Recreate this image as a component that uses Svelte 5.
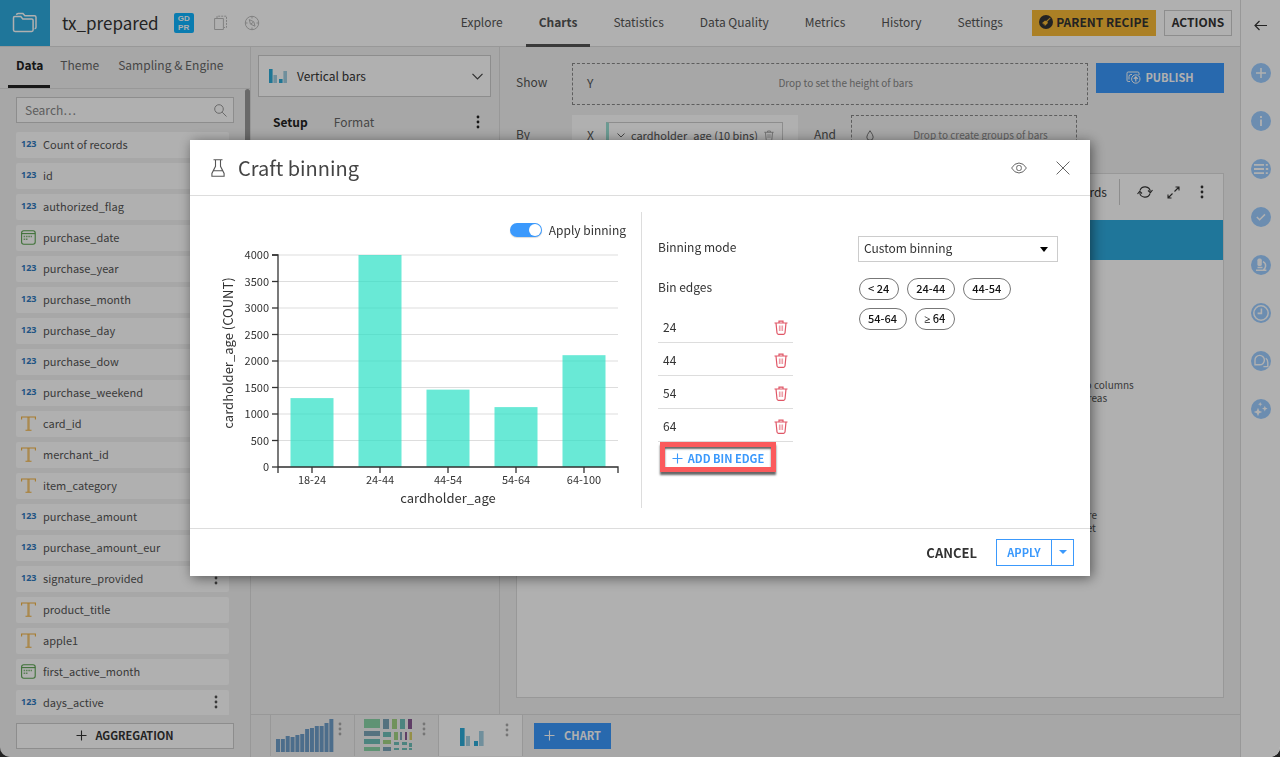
<script lang="ts">
  type ColumnKind = "num" | "date" | "text";
  type Column = { name: string; kind: ColumnKind; menu?: boolean };

  const navItems = ["Explore", "Charts", "Statistics", "Data Quality", "Metrics", "History", "Settings"];

  const columns: Column[] = [
    { name: "Count of records", kind: "num" },
    { name: "id", kind: "num" },
    { name: "authorized_flag", kind: "num" },
    { name: "purchase_date", kind: "date" },
    { name: "purchase_year", kind: "num" },
    { name: "purchase_month", kind: "num" },
    { name: "purchase_day", kind: "num" },
    { name: "purchase_dow", kind: "num" },
    { name: "purchase_weekend", kind: "num" },
    { name: "card_id", kind: "text" },
    { name: "merchant_id", kind: "text" },
    { name: "item_category", kind: "text" },
    { name: "purchase_amount", kind: "num" },
    { name: "purchase_amount_eur", kind: "num" },
    { name: "signature_provided", kind: "num", menu: true },
    { name: "product_title", kind: "text" },
    { name: "apple1", kind: "text" },
    { name: "first_active_month", kind: "date" },
    { name: "days_active", kind: "num", menu: true },
  ];

  const bins = [
    { label: "18-24", count: 1300 },
    { label: "24-44", count: 4000 },
    { label: "44-54", count: 1460 },
    { label: "54-64", count: 1130 },
    { label: "64-100", count: 2110 },
  ];

  const railItems = ["Add", "Details", "Schema", "Checks", "Lab", "Timeline", "Discussions", "Assistant"];

  const ticks = [0, 500, 1000, 1500, 2000, 2500, 3000, 3500, 4000];
  const plot = { left: 62, right: 402, top: 11, bottom: 223 };
  const band = (plot.right - plot.left) / bins.length;
  const barWidth = 43;

  let activeNav = $state("Charts");
  let applyBinning = $state(true);
  let binningMode = $state("custom");
  let edges = $state([24, 44, 54, 64]);

  let ranges = $derived(edges.slice(1).map((edge, i) => `${edges[i]}-${edge}`));

  function yFor(value: number): number {
    return plot.bottom - (value / 4000) * (plot.bottom - plot.top);
  }

  function xFor(index: number): number {
    return plot.left + band * (index + 0.5);
  }

  function removeEdge(index: number) {
    edges = edges.filter((_, i) => i !== index);
  }

  function addEdge() {
    edges = [...edges, (edges[edges.length - 1] ?? 14) + 10];
  }
</script>

{#snippet dots()}
  <svg class="dots" width="4" height="16" viewBox="0 0 4 16" fill="currentColor" aria-hidden="true">
    <circle cx="2" cy="3" r="1.4" />
    <circle cx="2" cy="8" r="1.4" />
    <circle cx="2" cy="13" r="1.4" />
  </svg>
{/snippet}

{#snippet plus()}
  <svg width="11" height="11" viewBox="0 0 11 11" stroke="currentColor" stroke-width="1.1" aria-hidden="true">
    <path d="M5.5 .5v10M.5 5.5h10" />
  </svg>
{/snippet}

{#snippet trash()}
  <svg width="14" height="15" viewBox="0 0 14 15" fill="none" stroke="currentColor" aria-hidden="true">
    <path d="M.5 3h13M5 2.800V1.200h4v1.600M2 3l1 10q.2 1.300 1.400 1.300h5.200q1.200 0 1.400-1.300L12 3" stroke-width="1.2" />
    <path d="M5.400 5.500v5.500M7 5.500v5.500M8.600 5.500v5.500" stroke-width=".8" opacity=".8" />
  </svg>
{/snippet}

{#snippet kindIcon(kind: ColumnKind)}
  {#if kind === "num"}
    <span class="kind-num">123</span>
  {:else if kind === "date"}
    <svg width="15" height="15" viewBox="0 0 15 15" fill="none" stroke="#5ba552" aria-hidden="true">
      <rect x=".6" y=".8" width="13.6" height="13.4" rx="2.2" stroke-width="1.1" />
      <path d="M.6 3.600h13.600" stroke-width="1.1" />
      <path d="M5 6.500h6M2.600 9.200h4" stroke-width="1.6" stroke-dasharray="1.6 .7" opacity=".75" />
      <path d="M2.600 6.500h2" stroke-width="1.6" stroke-dasharray="1.6 .7" opacity=".75" />
    </svg>
  {:else}
    <svg width="15" height="15" viewBox="0 0 15 15" fill="none" stroke="#f3b23f" aria-hidden="true">
      <path d="M.6 3.600V1h13.800v2.600M4.500 14.300h6" stroke-width="1.1" />
      <path d="M7.500 1v13" stroke-width="2.4" opacity=".7" />
    </svg>
  {/if}
{/snippet}

{#snippet miniBars()}
  <svg width="18" height="14" viewBox="0 0 18 14" aria-hidden="true">
    <path d="M0 0h3.600v14H0zM10 10h3.600v4H10z" fill="#2eabd8" />
    <path d="M4.400 6H8v8H4.400zM14.400 2H18v12h-3.600z" fill="#a2cfe2" />
  </svg>
{/snippet}

{#snippet railIcon(name: string)}
  <svg width="20" height="20" viewBox="0 0 20 20" fill="none" stroke="#fff" stroke-width="1.5" aria-hidden="true">
    <circle cx="10" cy="10" r="10" fill="#9dcdff" stroke="none" />
    {#if name === "Add"}
      <path d="M10 5v10M5 10h10" />
    {:else if name === "Details"}
      <path d="M10 8.500V15M10 5v2" stroke-width="1.8" />
    {:else if name === "Schema"}
      <path d="M3 5.800h10M3 10h10M3 14.200h10M14.800 5.800h2M14.800 10h2.400M14.800 14.200h2" stroke-width="1.8" />
    {:else if name === "Checks"}
      <path d="M5.800 10l2.800 2.700L14 7.400" />
    {:else if name === "Lab"}
      <rect x="6.4" y="3.6" width="4.4" height="7.4" rx="1.6" fill="#fff" stroke="none" />
      <path d="M5 15.300h10.400M12 6.600q3 1.400 2.600 4.600-.3 2.400-2.200 3.600M6.500 12.400h5" />
    {:else if name === "Timeline"}
      <circle cx="10" cy="10" r="7.2" />
      <path d="M10.400 5.600v4.800H6.600" stroke-width="1.6" />
    {:else if name === "Discussions"}
      <path d="M4 13.800V9.200a4.700 4.700 0 1 1 4.700 4.600zM14.800 7.200q2 1.400 2 4.200v4.200h-4.400" stroke-width="1.4" />
    {:else}
      <path
        d="M7 8.800l1.200 3 3 1.200-3 1.200L7 17.200l-1.200-3-3-1.200 3-1.200zM13.800 6.800l.8 2 2 .8-2 .8-.8 2-.8-2-2-.8 2-.8zM9.200 3l.6 1.600 1.600.6-1.600.6-.6 1.600-.6-1.600L7 5.200l1.600-.6z"
        fill="#fff"
        stroke="none"
      />
    {/if}
  </svg>
{/snippet}

<div class="app">
  <div class="workspace">
    <header class="topbar">
      <a class="logo" href="#flow" aria-label="Datasets">
        <svg width="26" height="22" viewBox="0 0 26 22" fill="none" stroke="#fff" stroke-width="1.5" aria-hidden="true">
          <path d="M1.500 18V5.800q0-1.300 1.300-1.300h6l2 2.500h9q1.300 0 1.300 1.300V18q0 1.400-1.400 1.400H3q-1.500 0-1.500-1.400z" />
          <path d="M4.500 2.800q.2-1.300 1.600-1.300h4.800l2 2.300h9.500q1.600 0 1.600 1.500v9.900q0 1.300-1.400 1.500" />
        </svg>
      </a>
      <h1>tx_prepared</h1>
      <span class="gdpr"><span>GD</span><span>PR</span></span>
      <svg class="meta-icon" width="14" height="16" viewBox="0 0 14 16" fill="none" stroke="#bbb" aria-hidden="true">
        <path d="M.6 3.500h8.800v11H.6z" />
        <path d="M3 3V1.200h9.500v11.300h-2.500" stroke-dasharray="2 1" />
      </svg>
      <svg class="meta-icon" width="16" height="16" viewBox="0 0 16 16" fill="none" stroke="#bbb" aria-hidden="true">
        <circle cx="8" cy="8" r="6.7" />
        <path d="M8 1v2.500M8 12.500V15M1 8h2.500M12.500 8H15M5.300 4.600l4.500 2.200 1.200 4.400-4.600-2.100zM7 8.800l2.200-1.500" />
      </svg>
      <nav>
        {#each navItems as item}
          <a href="#{item}" class:active={item === activeNav} onclick={() => (activeNav = item)}>{item}</a>
        {/each}
      </nav>
      <button class="recipe" type="button">
        <svg width="14" height="14" viewBox="0 0 14 14" aria-hidden="true">
          <circle cx="7" cy="7" r="7" fill="#333" />
          <path d="M11 2.600l.8.700-3.200 3.300.5 1.500-3 2.900-3.200-3 3-2.600 1.400.3zM4.300 8.300l2 2" fill="#f8ba36" stroke="#333" stroke-width=".4" />
        </svg>
        PARENT RECIPE
      </button>
      <button class="outlined actions" type="button">ACTIONS</button>
    </header>

    <div class="columns">
      <aside class="data-panel">
        <div class="tabs">
          <a class="active" href="#data">Data</a>
          <a href="#theme">Theme</a>
          <a href="#sampling">Sampling &amp; Engine</a>
        </div>
        <div class="panel-scroll">
          <div class="panel-main">
            <label class="search">
              <input type="text" placeholder="Search…" aria-label="Search columns" />
              <svg width="13" height="13" viewBox="0 0 13 13" fill="none" stroke="#999" aria-hidden="true">
                <circle cx="5" cy="5" r="4.3" />
                <path d="M8.200 8.200l4.300 4.300" />
              </svg>
            </label>
            <ul class="column-list">
              {#each columns as column}
                <li>
                  <span class="kind">{@render kindIcon(column.kind)}</span>
                  <span>{column.name}</span>
                  {#if column.menu}
                    {@render dots()}
                  {/if}
                </li>
              {/each}
            </ul>
            <button class="outlined aggregation" type="button">{@render plus()} AGGREGATION</button>
          </div>
          <div class="scroll-thumb"></div>
        </div>
      </aside>

      <div class="chart-area">
        <div class="chart-main">
          <section class="setup-panel">
            <button class="chart-type" type="button">
              {@render miniBars()}
              <span>Vertical bars</span>
              <svg width="11" height="7" viewBox="0 0 11 7" fill="none" stroke="#444" stroke-width="1.2" aria-hidden="true">
                <path d="M.5.800l5 5 5-5" />
              </svg>
            </button>
            <div class="setup-tabs">
              <a class="active" href="#setup">Setup</a>
              <a href="#format">Format</a>
              {@render dots()}
            </div>
          </section>

          <section class="canvas">
            <div class="drop-row">
              <span class="drop-label">Show</span>
              <div class="drop-zone wide">
                <span class="axis">Y</span>
                <span class="hint">Drop to set the height of bars</span>
              </div>
              <button class="primary publish" type="button">
                <svg width="15" height="13" viewBox="0 0 15 13" fill="none" stroke="#fff" aria-hidden="true">
                  <path d="M4 10.500H2.200Q1 10.500 1 9.300V2.200Q1 1 2.200 1h9.600Q13 1 13 2.200V4M3 8.500V5.500q0-2 2-2h1" />
                  <circle cx="9.8" cy="8" r="4.2" />
                  <path d="M9.800 10.600V5.800M7.800 7.800l2-2 2 2" stroke-width="1.2" />
                </svg>
                PUBLISH
              </button>
            </div>
            <div class="drop-row second">
              <span class="drop-label">By</span>
              <div class="filled-zone">
                <span class="axis">X</span>
                <span class="chip">
                  <svg width="8" height="5" viewBox="0 0 8 5" fill="none" stroke="#666" aria-hidden="true"><path d="M.5.500L4 4 7.500.500" /></svg>
                  <span>cardholder_age (10 bins)</span>
                  <span class="chip-trash">{@render trash()}</span>
                </span>
              </div>
              <span class="and">And</span>
              <div class="drop-zone group">
                <svg class="drop" width="8" height="13" viewBox="0 0 10 14" fill="none" stroke="#555" aria-hidden="true">
                  <path d="M5 1Q1 6.500 1 9a4 4 0 0 0 8 0Q9 6.500 5 1z" />
                </svg>
                <span class="hint">Drop to create groups of bars</span>
              </div>
            </div>

            <div class="chart-card">
              <div class="card-head">
                <span class="records">0 records</span>
                <svg width="16" height="14" viewBox="0 0 16 14" fill="none" stroke="#333" stroke-width="1.1" aria-hidden="true">
                  <path d="M3 5.500A5.300 5.300 0 0 1 13.300 6.500M13 8.500A5.300 5.300 0 0 1 2.700 7.500" />
                  <path d="M11 5.500l2.400 2.200L15.500 5M.5 9l2.200-2.600L5 8.500" />
                </svg>
                <svg width="13" height="13" viewBox="0 0 13 13" fill="none" stroke="#333" stroke-width="1.1" aria-hidden="true">
                  <path d="M8.500 1H12v3.500M12 1L7.500 5.500M1 8.500V12h3.500M1 12l4.500-4.500" />
                </svg>
                {@render dots()}
              </div>
              <div class="card-banner"></div>
              <div class="card-help">
                <p>to columns<br />areas</p>
                <p>are<br />set</p>
              </div>
            </div>
          </section>
        </div>

        <footer class="thumbs">
          <button class="thumb" type="button" aria-label="Histogram chart">
            <svg width="58" height="33" viewBox="0 0 58 33" aria-hidden="true">
              {#each [13, 13, 16, 15, 17, 18, 23, 24, 26, 26, 29, 33] as height, i}
                <rect x={i * 4.85} y={33 - height} width="4" {height} fill="#6f9fca" />
              {/each}
            </svg>
            {@render dots()}
          </button>
          <button class="thumb treemap" type="button" aria-label="Treemap chart">
            <svg width="48" height="32" viewBox="0 0 48 32" aria-hidden="true">
              <path d="M0 0h16v9H0zM0 28h16v4H0z" fill="#8ad6a8" />
              <path d="M0 12h16v5H0zM19 0h6v10h-6zM19 28h8v4h-8z" fill="#7ba5b8" />
              <path d="M0 20h16v5H0zM19 13h8v5h-8zM36 0h5v10h-5zM30 23h5v3h-5zM38 23h5v3h-5zM30 29h5v2h-5zM38 29h5v2h-5zM45 24h3v4h-3zM45 29h3v2h-3z" fill="#6fbfb8" />
              <path d="M28 0h5v10h-5zM19 21h8v4h-8zM30 13h4v8h-4z" fill="#a3d484" />
              <path d="M44 0h4v10h-4zM41 13h2v8h-2z" fill="#8a5a94" />
              <path d="M36 13h2v8h-2z" fill="#7ba5b8" />
              <path d="M45.500 13H48v8h-2.500z" fill="#d8cf68" />
            </svg>
            {@render dots()}
          </button>
          <button class="thumb current" type="button" aria-label="Vertical bars chart">
            <svg width="24" height="18" viewBox="0 0 24 18" aria-hidden="true">
              <path d="M0 0h4.600v18H0zM14 13h4v5h-4z" fill="#2eabd8" />
              <path d="M6 8h4v10H6zM19 3h4.600v15H19z" fill="#a2cfe2" />
            </svg>
            {@render dots()}
          </button>
          <button class="primary add-chart" type="button">{@render plus()} CHART</button>
        </footer>
      </div>
    </div>
  </div>

  <aside class="rail">
    <button type="button" aria-label="Collapse panel">
      <svg width="13" height="11" viewBox="0 0 13 11" fill="none" stroke="#333" stroke-width="1.2" aria-hidden="true">
        <path d="M13 5.500H1M5.500 1L1 5.500 5.500 10" />
      </svg>
    </button>
    {#each railItems as item}
      <button type="button" aria-label={item}>{@render railIcon(item)}</button>
    {/each}
  </aside>
</div>

<div class="backdrop">
  <div class="modal" role="dialog" aria-modal="true" aria-labelledby="modal-title">
    <div class="modal-header">
      <svg width="14" height="18" viewBox="0 0 14 18" fill="none" stroke="#555" stroke-width="1.1" aria-hidden="true">
        <path d="M2.500.800h9M4.500.800v6.500L.9 14.500V17.200h12.200V14.500L9.500 7.300V.800M2.600 11.800h8.800" />
      </svg>
      <h2 id="modal-title">Craft binning</h2>
      <button class="icon-button" type="button" aria-label="Preview">
        <svg width="16" height="12" viewBox="0 0 16 12" fill="none" stroke="#666" aria-hidden="true">
          <path d="M.6 6Q3.500 1 8 1t7.400 5Q12.500 11 8 11T.6 6z" />
          <rect x="5.7" y="3.5" width="4.6" height="5" rx="1.8" />
        </svg>
      </button>
      <button class="icon-button" type="button" aria-label="Close">
        <svg width="14" height="14" viewBox="0 0 14 14" fill="none" stroke="#555" stroke-width=".9" aria-hidden="true">
          <path d="M.6.600l12.800 12.800M13.400.600L.6 13.400" />
        </svg>
      </button>
    </div>

    <div class="modal-body">
      <div class="preview">
        <label class="toggle">
          <input type="checkbox" bind:checked={applyBinning} />
          <span>Apply binning</span>
        </label>
        <svg class="chart" viewBox="0 0 410 264" role="img" aria-label="cardholder_age by count">
          {#each ticks as tick}
            <line class="grid" x1={plot.left} x2={plot.right} y1={yFor(tick)} y2={yFor(tick)} />
          {/each}
          {#each bins as bin, i}
            <rect
              class="bar"
              x={xFor(i) - barWidth / 2}
              y={yFor(bin.count)}
              width={barWidth}
              height={plot.bottom - yFor(bin.count)}
            />
            <line class="axis-line" x1={xFor(i)} x2={xFor(i)} y1={plot.bottom} y2={plot.bottom + 6} />
            <text class="tick" x={xFor(i)} y="240" text-anchor="middle">{bin.label}</text>
          {/each}
          <path
            class="axis-line"
            d="M{plot.left - 6} {plot.top}H{plot.left}V{plot.bottom + 6}M{plot.left} {plot.bottom}H{plot.right}v6"
          />
          {#each ticks as tick}
            <line class="axis-line" x1={plot.left - 6} x2={plot.left} y1={yFor(tick)} y2={yFor(tick)} />
            <text class="tick" x="53" y={yFor(tick) + 4} text-anchor="end">{tick}</text>
          {/each}
          <text class="title" x={(plot.left + plot.right) / 2} y="259" text-anchor="middle">cardholder_age</text>
          <text class="title" transform="translate(17 109) rotate(-90)" text-anchor="middle">cardholder_age (COUNT)</text>
        </svg>
      </div>

      <div class="settings">
        <label class="setting-name" for="binning-mode">Binning mode</label>
        <div class="select-wrap">
          <select id="binning-mode" bind:value={binningMode}>
            <option value="custom">Custom binning</option>
            <option value="fixed">Fixed number of bins</option>
          </select>
          <svg width="8" height="5" viewBox="0 0 8 5" aria-hidden="true"><path d="M0 0h8L4 5z" /></svg>
        </div>
        <div class="edges">
          <span class="setting-name">Bin edges</span>
          <ul>
            {#each edges as edge, i}
              <li>
                <input type="text" bind:value={edges[i]} aria-label="Bin edge {i + 1}" />
                <button type="button" aria-label="Delete edge {edge}" onclick={() => removeEdge(i)}>{@render trash()}</button>
              </li>
            {/each}
          </ul>
          <div class="highlight">
            <button type="button" onclick={addEdge}>{@render plus()} ADD BIN EDGE</button>
          </div>
        </div>
        <div class="pills">
          {#if edges.length > 0}
            <span class="pill">&lt; {edges[0]}</span>
            {#each ranges as range}
              <span class="pill">{range}</span>
            {/each}
            <span class="pill"><span class="symbol">≥</span> {edges[edges.length - 1]}</span>
          {/if}
        </div>
      </div>
    </div>

    <div class="modal-footer">
      <button class="cancel" type="button">CANCEL</button>
      <div class="split">
        <button type="button">APPLY</button>
        <button class="caret" type="button" aria-label="More apply options">
          <svg width="8" height="4" viewBox="0 0 8 4" fill="currentColor" aria-hidden="true"><path d="M0 0h8L4 4z" /></svg>
        </button>
      </div>
    </div>
  </div>
</div>

<style>
  :global(body) {
    background: #222;
  }

  .app,
  .backdrop {
    --text: #333;
    --muted: #666;
    --line: #ddd;
    --blue: #3b99fc;
    font-family: "Noto Sans CJK SC", "Noto Sans", sans-serif;
    font-size: 12px;
    line-height: 18px;
    color: var(--text);
    border-radius: 0 0 10px 10px;
  }

  .app *,
  .backdrop * {
    box-sizing: border-box;
  }

  button,
  input,
  select {
    font: inherit;
    color: inherit;
    margin: 0;
  }

  button {
    display: flex;
    align-items: center;
    justify-content: center;
    border: none;
    background: none;
    padding: 0;
    cursor: pointer;
  }

  a {
    color: inherit;
    text-decoration: none;
  }

  ul {
    list-style: none;
    margin: 0;
    padding: 0;
  }

  svg {
    flex-shrink: 0;
    display: block;
  }

  .app {
    display: flex;
    height: 100vh;
    overflow: hidden;
    background: #f2f2f2;
  }

  .workspace {
    flex: 1;
    min-width: 0;
    display: flex;
    flex-direction: column;
  }

  .topbar {
    display: flex;
    align-items: center;
    height: 47px;
    padding-right: 8px;
    background: #fff;
    border-bottom: 1px solid var(--line);
  }

  .logo {
    display: flex;
    align-items: center;
    justify-content: center;
    width: 50px;
    height: 46px;
    background: #2eabdf;
  }

  h1 {
    margin: 0 15px 0 12px;
    font-size: 17px;
    line-height: 24px;
    font-weight: 400;
  }

  .gdpr {
    display: flex;
    flex-direction: column;
    align-items: center;
    width: 20px;
    height: 20px;
    padding-top: 1px;
    border-radius: 2px;
    background: #0fb4ff;
    color: #fff;
    font-family: "Liberation Sans", sans-serif;
    font-size: 8px;
    line-height: 9px;
    font-weight: 700;
  }

  .meta-icon {
    margin-left: 20px;
  }

  .meta-icon + .meta-icon {
    margin-left: 16px;
  }

  nav {
    display: flex;
    gap: 10px;
    height: 47px;
    margin-left: auto;
    margin-right: 16px;
  }

  nav a {
    padding: 13px 13px 0;
    border-bottom: 3px solid transparent;
    color: #555;
  }

  nav a.active {
    font-weight: 700;
    border-color: #555;
  }

  .outlined {
    gap: 8px;
    height: 26px;
    border: 1px solid #ccc;
    background: #fff;
    font-weight: 700;
  }

  .actions {
    width: 68px;
    margin-left: 8px;
    padding-bottom: 2px;
  }

  .aggregation {
    padding-bottom: 2px;
    font-size: 11px;
  }

  .recipe {
    gap: 3px;
    width: 124px;
    height: 26px;
    padding-bottom: 2px;
    background: #f8ba36;
    font-weight: 700;
  }

  .primary {
    padding-bottom: 2px;
    background: var(--blue);
    color: #fff;
    font-size: 11px;
    font-weight: 700;
  }

  .columns {
    flex: 1;
    min-height: 0;
    display: flex;
  }

  .data-panel {
    width: 251px;
    display: flex;
    flex-direction: column;
    border-right: 1px solid var(--line);
  }

  .tabs {
    display: flex;
    height: 42px;
    padding-left: 8px;
    border-bottom: 1px solid var(--line);
    color: var(--muted);
  }

  .tabs a {
    padding: 9px 9px 0 10px;
  }

  .tabs .active {
    padding: 9px 7px 0 8px;
    color: #222;
    font-weight: 700;
    border-bottom: 3px solid #222;
  }

  .panel-scroll {
    flex: 1;
    min-height: 0;
    display: flex;
  }

  .panel-main {
    flex: 1;
    display: flex;
    flex-direction: column;
    padding: 8px 11px 8px 16px;
  }

  .scroll-thumb {
    width: 5px;
    height: 400px;
    border-radius: 3px;
    background: #999;
  }

  .search {
    display: flex;
    align-items: center;
    height: 26px;
    padding: 0 6px 0 8px;
    border: 1px solid #ccc;
    background: #fff;
  }

  .search input {
    flex: 1;
    min-width: 0;
    padding: 0;
    border: none;
    outline: none;
    background: none;
  }

  .search input::placeholder {
    color: #888;
  }

  .column-list {
    flex: 1;
    min-height: 0;
    overflow: hidden;
    display: flex;
    flex-direction: column;
    gap: 5px;
    margin: 9px 5px 8px 0;
  }

  .column-list li {
    display: flex;
    flex-shrink: 0;
    align-items: center;
    height: 26px;
    padding: 0 11px 2px 5px;
    border-radius: 2px;
    background: #fff;
    color: #555;
    font-size: 11px;
  }

  .column-list .dots,
  .setup-tabs .dots {
    margin-left: auto;
  }

  .kind {
    display: flex;
    width: 22px;
  }

  .kind-num {
    color: #2f7ac0;
    font: 700 9px/18px "Open Sans", sans-serif;
  }

  .chart-area {
    flex: 1;
    min-width: 0;
    display: flex;
    flex-direction: column;
  }

  .chart-main {
    flex: 1;
    min-height: 0;
    display: flex;
  }

  .setup-panel {
    width: 249px;
    padding: 8px 8px 0 7px;
    border-right: 1px solid var(--line);
  }

  .chart-type {
    width: 100%;
    height: 42px;
    padding: 0 7px 0 10px;
    gap: 10px;
    border: 1px solid #ccc;
    background: #fff;
  }

  .chart-type span {
    flex: 1;
    text-align: left;
  }

  .setup-tabs {
    display: flex;
    align-items: center;
    gap: 26px;
    padding: 16px 11px 0 15px;
    color: var(--muted);
  }

  .setup-tabs .active {
    color: #222;
    font-weight: 700;
  }

  .setup-tabs .dots {
    color: #222;
  }

  .canvas {
    flex: 1;
    min-width: 0;
    display: flex;
    flex-direction: column;
    padding: 16px;
    color: #555;
  }

  .drop-row {
    display: flex;
  }

  .drop-row.second {
    margin: 10px 0 16px;
  }

  .drop-label {
    width: 56px;
    line-height: 38px;
  }

  .drop-zone {
    display: flex;
    align-items: center;
    height: 42px;
    padding: 0 14px 2px;
    border: 1px dashed #888;
  }

  .drop-zone.wide {
    flex: 1;
  }

  .drop-zone.group {
    width: 226px;
  }

  .hint {
    flex: 1;
    padding-left: 25px;
    text-align: center;
    font-size: 10px;
    color: #888;
  }

  .publish {
    width: 128px;
    height: 30px;
    gap: 4px;
    margin-left: 8px;
  }

  .filled-zone {
    display: flex;
    align-items: center;
    width: 226px;
    height: 42px;
    padding: 0 15px 2px;
    gap: 12px;
    background: #fff;
  }

  .chip {
    flex: 1;
    display: flex;
    align-items: center;
    justify-content: space-between;
    height: 26px;
    padding: 0 8px;
    border: 1px solid #ccc;
    border-left: 3px solid #9be0d4;
    font-size: 11px;
    white-space: nowrap;
  }

  .chip-trash svg {
    width: 10px;
    height: 11px;
    color: #999;
  }

  .and {
    width: 53px;
    padding-left: 16px;
    line-height: 38px;
  }

  .chart-card {
    flex: 1;
    border: 1px solid var(--line);
    background: #fff;
  }

  .card-head {
    display: flex;
    align-items: center;
    justify-content: flex-end;
    height: 46px;
    padding: 0 19px 10px 0;
    gap: 14px;
    color: #333;
  }

  .card-head .records {
    padding: 4px 12px 4px 0;
    margin-right: 3px;
    border-right: 1px solid #ccc;
  }

  .card-head .dots {
    margin-left: 6px;
  }

  .card-banner {
    height: 40px;
    background: #2eabdf;
  }

  .card-help {
    width: 141px;
    margin-left: auto;
    padding-top: 118px;
    font-size: 10px;
    line-height: 13px;
  }

  .card-help p {
    margin: 0 0 104px;
  }

  .thumbs {
    display: flex;
    height: 43px;
    padding-left: 19px;
    border-top: 1px solid var(--line);
  }

  .thumb {
    justify-content: space-between;
    align-items: flex-start;
    width: 84px;
    height: 41px;
    padding: 4px 12px 0 5px;
    border-left: 1px solid var(--line);
    color: #aaa;
  }

  .thumb.treemap {
    padding-left: 9px;
  }

  .thumb.current {
    width: 85px;
    padding: 13px 13px 0 21px;
    border-right: 1px solid var(--line);
    background: #fff;
  }

  .thumb .dots {
    height: 20px;
  }

  .thumb.current .dots {
    margin-top: -8px;
  }

  .add-chart {
    width: 77px;
    height: 26px;
    gap: 9px;
    margin: 8px 0 0 11px;
  }

  .rail {
    display: flex;
    flex-direction: column;
    align-items: center;
    width: 40px;
    padding-top: 15px;
    gap: 28px;
    border-left: 1px solid var(--line);
    background: #fff;
  }

  .rail button {
    width: 20px;
    height: 20px;
  }

  .backdrop {
    position: fixed;
    inset: 0;
    display: flex;
    align-items: flex-start;
    justify-content: center;
    padding-top: 140px;
    box-sizing: border-box;
    background: rgba(0, 0, 0, 0.31);
  }

  .modal {
    width: 900px;
    max-width: 100%;
    background: #fff;
    box-shadow: 2px 2px 12px rgba(0, 0, 0, 0.5);
  }

  .modal-header {
    display: flex;
    align-items: center;
    height: 56px;
    padding: 0 20px 0 21px;
    border-bottom: 1px solid var(--line);
  }

  h2 {
    flex: 1;
    margin: 0 0 0 13px;
    font-size: 20px;
    line-height: 28px;
    font-weight: 400;
    color: #444;
  }

  .icon-button + .icon-button {
    margin-left: 29px;
  }

  .modal-body {
    display: flex;
    padding: 16px 16px 20px;
  }

  .preview {
    width: 436px;
    padding: 8px 15px 0 10px;
    border-right: 1px solid var(--line);
  }

  .toggle {
    display: flex;
    align-items: center;
    justify-content: flex-end;
    gap: 7px;
    height: 20px;
    margin-bottom: 4px;
  }

  .toggle input {
    appearance: none;
    display: flex;
    justify-content: flex-start;
    width: 32px;
    height: 14px;
    padding: 1px;
    border-radius: 7px;
    background: #bbb;
    box-shadow: 0 1px 1px rgba(0, 0, 0, 0.15);
    cursor: pointer;
  }

  .toggle input::before {
    content: "";
    width: 12px;
    height: 12px;
    border-radius: 50%;
    background: #fff;
  }

  .toggle input:checked {
    justify-content: flex-end;
    background: var(--blue);
  }

  .chart {
    width: 100%;
  }

  .grid {
    stroke: #ddd;
  }

  .bar {
    fill: #29e0c5;
    fill-opacity: 0.7;
  }

  .axis-line {
    fill: none;
    stroke: #333;
    stroke-width: 1.3;
  }

  .tick {
    font-size: 11px;
    fill: #333;
  }

  .title {
    font-size: 13px;
    fill: #333;
  }

  .settings {
    flex: 1;
    display: grid;
    grid-template-columns: 200px 200px;
    align-content: start;
    row-gap: 16px;
    padding: 24px 0 0 16px;
  }

  .setting-name {
    line-height: 22px;
  }

  .select-wrap {
    display: flex;
    align-items: center;
    height: 26px;
    padding-right: 9px;
    border: 1px solid #ccc;
  }

  .select-wrap select {
    flex: 1;
    height: 24px;
    padding: 0 5px 2px;
    border: none;
    background: none;
    appearance: none;
  }

  .edges {
    width: 135px;
    margin-top: -2px;
  }

  .edges li {
    display: flex;
    align-items: center;
    height: 33px;
    padding: 2px 5px 0;
    border-bottom: 1px solid var(--line);
  }

  .edges ul {
    margin-top: 12px;
  }

  .edges input {
    flex: 1;
    min-width: 0;
    padding: 0;
    border: none;
    outline: none;
  }

  .edges li button {
    color: #e05666;
  }

  .highlight {
    width: 116px;
    margin: 0 0 0 2px;
    border: 5px solid #fb5a5c;
    box-shadow: 0 3px 2px rgba(0, 0, 0, 0.6), inset 0 2px 2px rgba(0, 0, 0, 0.6);
  }

  .highlight button {
    width: 100%;
    height: 20px;
    padding-top: 2px;
    gap: 5px;
    color: var(--blue);
    font-size: 11px;
    font-weight: 700;
    white-space: nowrap;
  }

  .pills {
    display: flex;
    flex-wrap: wrap;
    align-content: flex-start;
    gap: 8px;
    padding-left: 1px;
  }

  .pill {
    height: 22px;
    padding: 0 9px 0 8px;
    border: 1px solid #777;
    border-radius: 11px;
    line-height: 19px;
    font-size: 11px;
    font-weight: 500;
    color: #111;
  }

  .symbol {
    font-family: "Open Sans", sans-serif;
  }

  .modal-footer {
    display: flex;
    align-items: center;
    justify-content: flex-end;
    height: 48px;
    padding: 0 16px;
    gap: 19px;
    border-top: 1px solid var(--line);
  }

  .cancel {
    font-size: 13px;
    font-weight: 700;
  }

  .split {
    display: flex;
    height: 27px;
    border: 1px solid var(--blue);
    color: var(--blue);
  }

  .split button {
    width: 54px;
    padding-bottom: 2px;
    font-size: 11px;
    font-weight: 700;
  }

  .split .caret {
    width: 22px;
    border-left: 1px solid var(--blue);
  }
</style>
